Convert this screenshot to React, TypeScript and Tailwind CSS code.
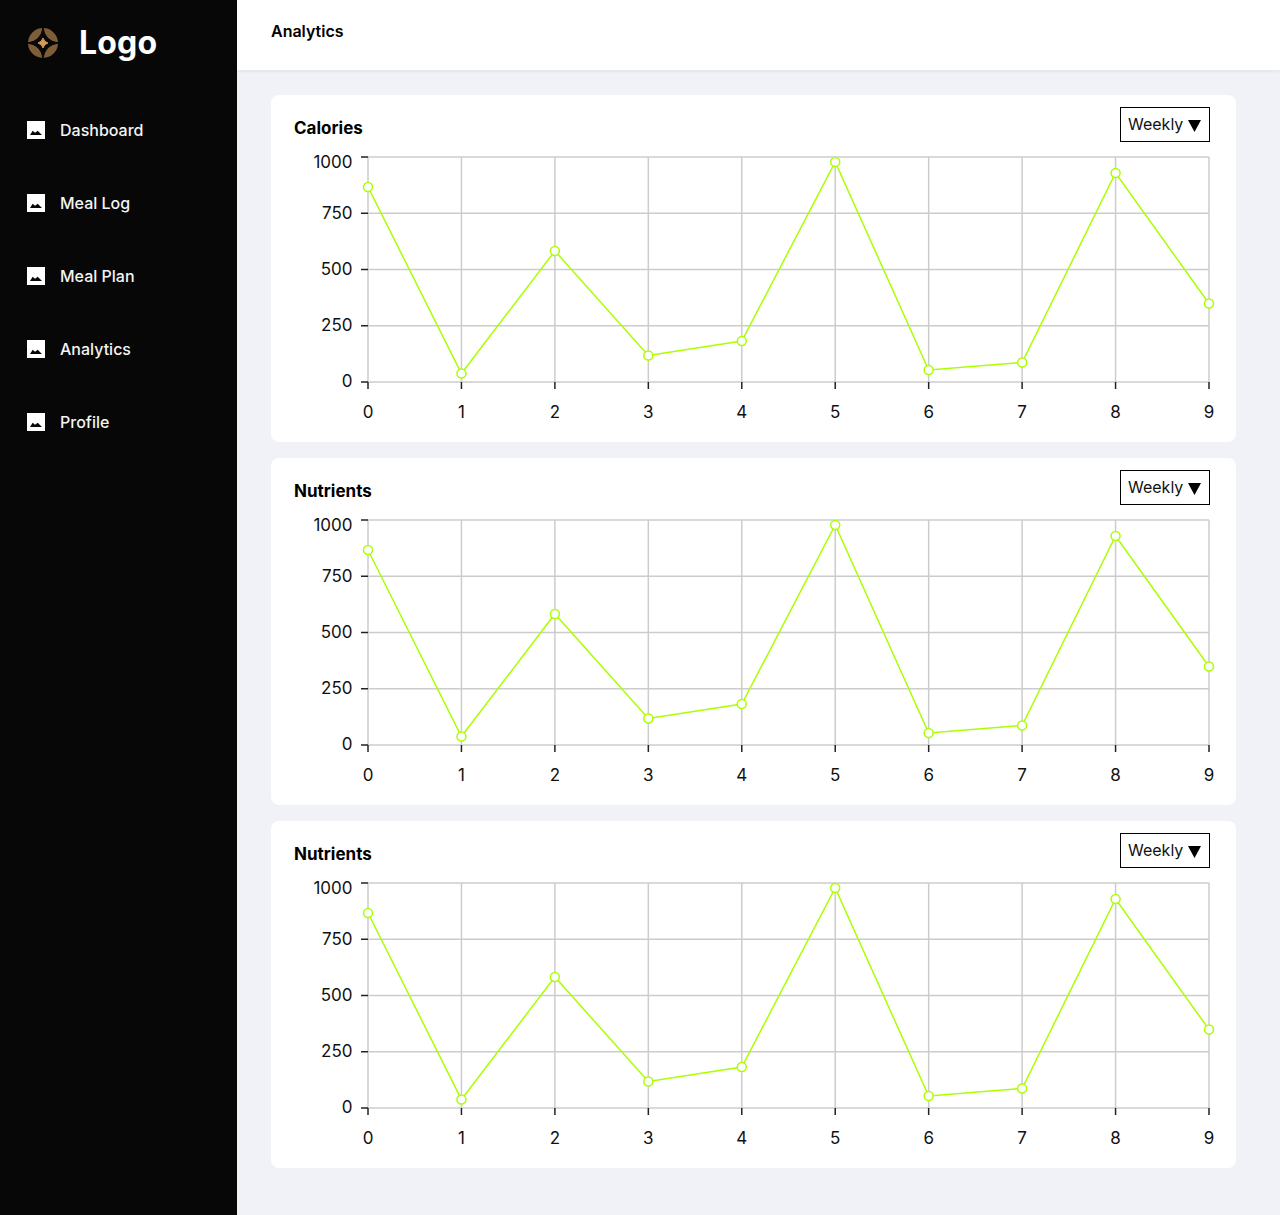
const FONT = "font-['Inter','Liberation_Sans',sans-serif]";
const nav = ["Dashboard", "Meal Log", "Meal Plan", "Analytics", "Profile"];
const vals = [187, 373.5, 251, 355.5, 341, 162, 370, 362.5, 173, 303.5];
const xs = vals.map((_, i) => 368 + (i * 841) / 9);
const grid = [157, 213.25, 269.5, 325.75, 382];
const yLabels: [string, number][] = [["1000", 167.5], ["750", 218.5], ["500", 275], ["250", 331], ["0", 387]];

function Logo() {
  return (
    <svg width="32" height="32" viewBox="0 0 32 32">
      <circle cx="16" cy="16" r="15" fill="#7e5e36" />
      <path d="M16 0.500Q17.800 14.200 31.500 16Q17.800 17.800 16 31.500Q14.200 17.800 0.500 16Q14.200 14.200 16 0.500Z" fill="#070707" stroke="#070707" strokeWidth="1" />
      <path d="M16 11Q17 15 21 16Q17 17 16 21Q15 17 11 16Q15 15 16 11Z" fill="#d69c58" stroke="#d69c58" strokeWidth="1" />
    </svg>
  );
}

function PictureIcon() {
  return (
    <svg width="18" height="18" viewBox="0 0 18 18" className="shrink-0">
      <rect width="18" height="18" fill="#ffffff" />
      <path d="M3 14L5.700 9.700L8 11.800L10.700 9.700L15 14Z" fill="#070707" />
    </svg>
  );
}

function Chart() {
  return (
    <svg viewBox="271 142 965 300" width="965" height="300" className="block">
      {grid.map((y) => (
        <line key={y} x1="368" x2="1209" y1={y} y2={y} stroke="#cccccc" strokeWidth="1.5" />
      ))}
      {xs.map((x) => (
        <line key={x} x1={x} x2={x} y1="157" y2="382" stroke="#cccccc" strokeWidth="1.5" />
      ))}
      {grid.map((y) => (
        <line key={y} x1="361" x2="368" y1={y} y2={y} stroke="#222222" strokeWidth="1.5" />
      ))}
      {xs.map((x) => (
        <line key={x} x1={x} x2={x} y1="382" y2="389" stroke="#222222" strokeWidth="1.5" />
      ))}
      {yLabels.map(([t, y]) => (
        <text key={t} x="352.500" y={y} textAnchor="end" fontSize="17" fill="#111111">{t}</text>
      ))}
      {xs.map((x, i) => (
        <text key={x} x={x} y="418" textAnchor="middle" fontSize="17" fill="#111111">{i}</text>
      ))}
      <polyline points={xs.map((x, i) => `${x},${vals[i]}`).join(" ")} fill="none" stroke="#aaff00" strokeWidth="1.5" />
      {xs.map((x, i) => (
        <circle key={x} cx={x} cy={vals[i]} r="4.500" fill="#ffffff" stroke="#aaff00" strokeWidth="1.5" />
      ))}
    </svg>
  );
}

function Card({ title }: { title: string }) {
  return (
    <section className="bg-white rounded-lg w-[965px] h-[347px]">
      <div className="flex justify-between items-start h-[47px] pl-[23px] pr-[26px] pt-3">
        <h2 className="text-[17px] font-bold text-black leading-6 mt-[9px]">{title}</h2>
        <div className="w-[90px] h-[35px] border border-black bg-white flex items-center pl-[7px] pb-[2px] gap-[5px] text-base text-[#111111]">
          <span>Weekly</span>
          <svg width="13" height="12" viewBox="0 0 13 12" className="mt-[5px]"><path d="M0 0H13L6.500 12Z" fill="#000000" /></svg>
        </div>
      </div>
      <Chart />
    </section>
  );
}

export default function App() {
  return (
    <div className={`${FONT} flex min-h-[1215px] bg-[#f0f2f8]`}>
      <aside className="w-[237px] shrink-0 bg-[#070707] text-white">
        <div className="flex items-center gap-5 pl-[27px] h-[86px]">
          <Logo />
          <span className="text-[32px] font-bold leading-none tracking-[0.2px]">Logo</span>
        </div>
        <nav className="flex flex-col gap-[49px] pl-[27px] pt-[32px]">
          {nav.map((n) => (
            <div key={n} className="flex items-center gap-[15px] h-6">
              <PictureIcon />
              <span className="text-base font-medium text-[#f4f4f4]">{n}</span>
            </div>
          ))}
        </nav>
      </aside>
      <main className="flex-1 min-w-0">
        <header className="bg-white h-[70px] pl-[34px] pt-[19px] shadow-[0_1px_4px_rgba(0,0,0,0.08)]">
          <h1 className="text-base font-semibold text-black leading-6">Analytics</h1>
        </header>
        <div className="flex flex-col gap-4 pl-[34px] pt-[25px]">
          <Card title="Calories" />
          <Card title="Nutrients" />
          <Card title="Nutrients" />
        </div>
      </main>
    </div>
  );
}
